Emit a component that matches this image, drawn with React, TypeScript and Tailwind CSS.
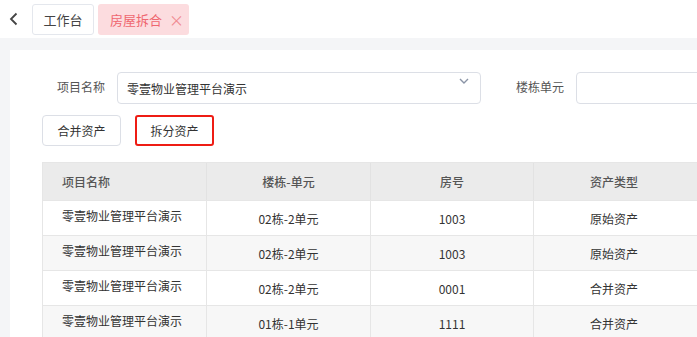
import React from "react";

const rows = [
    { name: "零壹物业管理平台演示", unit: "02栋-2单元", room: "1003", type: "原始资产" },
    { name: "零壹物业管理平台演示", unit: "02栋-2单元", room: "1003", type: "原始资产" },
    { name: "零壹物业管理平台演示", unit: "02栋-2单元", room: "0001", type: "合并资产" },
    { name: "零壹物业管理平台演示", unit: "01栋-1单元", room: "1111", type: "合并资产" },
];

const font = { fontFamily: '"Noto Sans CJK SC", "Noto Sans", sans-serif' };

const App = () => {
    return (
        <div
            className="w-[697px] h-[337px] overflow-hidden bg-[#f4f5f7] text-[12px] leading-[17px] whitespace-nowrap"
            style={font}
        >
            {/* tab bar */}
            <div className="h-[38px] bg-white flex items-center">
                <div className="w-[32px] h-full flex items-center justify-center shrink-0">
                    <svg width="10" height="14" viewBox="0 0 10 14" className="ml-[-4px]">
                        <path d="M7.5 1.5 L2 7 L7.5 12.5" fill="none" stroke="#444" strokeWidth="1.8" />
                    </svg>
                </div>
                <div className="h-[31px] w-[62px] shrink-0 border border-[#e4e7ed] rounded-[3px] flex items-center justify-center text-[13px] text-[#444]">
                    工作台
                </div>
                <div className="ml-[4px] h-[31px] w-[91px] shrink-0 rounded-[3px] bg-[#fcdcdf] flex items-center pl-[12px] text-[13px] text-[#ef6770]">
                    房屋拆合
                    <span className="ml-[7px] text-[15px] text-[#f08a90] leading-none">×</span>
                </div>
            </div>

            {/* page body */}
            <div className="pl-[10px] pt-[12px]">
                <div className="bg-white h-[300px] pl-[32px] pt-[22px]">
                    <div className="flex items-center">
                        <div className="w-[63px] shrink-0 text-right text-[#555] pb-[3px]">项目名称</div>
                        <div className="ml-[12px] shrink-0 relative w-[364px] h-[32px] border border-[#dcdfe6] rounded-[4px] flex items-center pl-[9px] text-[#333]">
                            零壹物业管理平台演示
                            <svg width="10" height="6" viewBox="0 0 10 6" className="absolute right-[11px] top-[5px]">
                                <path d="M1 1 L5 5 L9 1" fill="none" stroke="#8a94a6" strokeWidth="1.4" />
                            </svg>
                        </div>
                        <div className="ml-[35px] shrink-0 text-[#555] pb-[3px]">楼栋单元</div>
                        <div className="ml-[12px] w-[200px] h-[32px] border border-[#dcdfe6] rounded-[4px] shrink-0" />
                    </div>

                    <div className="flex mt-[11px] gap-[14px]">
                        <button className="w-[79px] h-[31px] border border-[#dcdfe6] rounded-[4px] text-[#333] bg-white">
                            合并资产
                        </button>
                        <button className="w-[79px] h-[31px] border-2 border-[#ee1c14] rounded-[3px] text-[#333] bg-white">
                            拆分资产
                        </button>
                    </div>

                    {/* table */}
                    <div className="mt-[16px] w-[700px] border-t border-l border-[#e6e6e6]">
                        <div className="grid grid-cols-[164px_164px_163px_200px] h-[37px] bg-[#ebebeb] text-[#555] font-medium">
                            <div className="flex items-center pl-[19px] border-r border-[#e2e2e2]">项目名称</div>
                            <div className="flex items-center justify-center border-r border-[#e2e2e2]">楼栋-单元</div>
                            <div className="flex items-center justify-center border-r border-[#e2e2e2]">房号</div>
                            <div className="flex items-center justify-center pr-[40px]">资产类型</div>
                        </div>
                        {rows.map((r, i) => (
                            <div
                                key={i}
                                className={`grid grid-cols-[164px_164px_163px_200px] h-[35px] border-t border-[#e6e6e6] text-[#333] ${
                                    i % 2 === 1 ? "bg-[#f7f7f7]" : "bg-white"
                                }`}
                            >
                                <div className="flex items-center pl-[19px] pb-[5px] border-r border-[#e6e6e6]">{r.name}</div>
                                <div className="flex items-center justify-center border-r border-[#e6e6e6]">{r.unit}</div>
                                <div className="flex items-center justify-center border-r border-[#e6e6e6]">{r.room}</div>
                                <div className="flex items-center justify-center pr-[40px]">{r.type}</div>
                            </div>
                        ))}
                    </div>
                </div>
            </div>
        </div>
    );
};

export default App;
